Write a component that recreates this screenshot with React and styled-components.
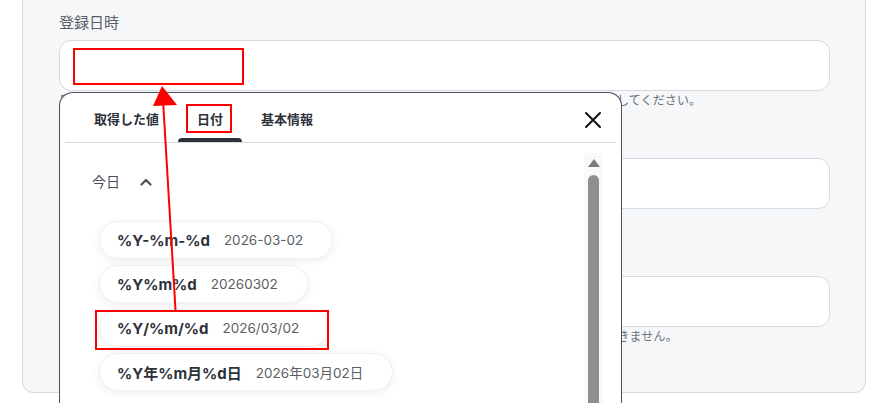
import React from 'react';
import styled, { createGlobalStyle } from 'styled-components';

const GlobalStyle = createGlobalStyle`
    html, body {
        margin: 0;
        padding: 0;
        background: #ffffff;
    }
    body {
        font-family: Inter, "Noto Sans CJK JP", sans-serif;
        color: #2d3139;
    }
`;

const Page = styled.div`
    position: relative;
    width: 893px;
    height: 403px;
    overflow: hidden;
    padding: 0 27px 0 22px;
    box-sizing: border-box;
`;

const Card = styled.section`
    background: #f6f7f9;
    border: 1px solid #d5d9e0;
    border-top: none;
    border-radius: 0 0 12px 12px;
    padding: 13px 35px 47px 36px;
    display: flex;
    flex-direction: column;
    gap: 22px;
`;

const Field = styled.div`
    display: flex;
    flex-direction: column;
`;

const Label = styled.label`
    font-size: 15px;
    line-height: 20px;
    color: #5b6068;
    margin-bottom: 7px;
`;

const InputWrap = styled.div`
    position: relative;
`;

const Input = styled.div`
    height: 51px;
    box-sizing: border-box;
    background: #ffffff;
    border: 1px solid #d5d9e0;
    border-radius: 12px;
`;

const Helper = styled.p`
    margin: 2px 0 0;
    font-size: 12px;
    letter-spacing: 0.14px;
    line-height: 16px;
    color: #6b7078;
    white-space: nowrap;
`;

const Popup = styled.div`
    position: absolute;
    left: 0;
    top: calc(100% + 1px);
    width: 563px;
    height: 330px;
    box-sizing: border-box;
    background: #ffffff;
    border: 1px solid #4b5058;
    border-bottom: none;
    border-radius: 14px 14px 0 0;
    display: flex;
    flex-direction: column;
    z-index: 2;
`;

const TabBar = styled.div`
    display: flex;
    align-items: flex-end;
    margin: 0 5px;
    padding: 0 15px 0 10px;
    border-bottom: 1px solid #d6dae1;
`;

const Tab = styled.div`
    position: relative;
    padding: 16px 19px 13px;
    font-size: 13px;
    font-weight: 700;
    line-height: 20px;
    color: #2d3139;

    &::after {
        content: '';
        display: ${p => (p.$active ? 'block' : 'none')};
        position: absolute;
        left: 0;
        right: 0;
        bottom: 0;
        height: 4px;
        border-radius: 4px 4px 0 0;
        background: #2d3139;
    }
`;

const CloseButton = styled.button`
    margin-left: auto;
    align-self: center;
    margin-top: 4px;
    width: 16px;
    height: 16px;
    padding: 0;
    border: none;
    background: none;
    display: flex;
`;

const Body = styled.div`
    flex: 1;
    display: flex;
    min-height: 0;
`;

const List = styled.div`
    flex: 1;
    padding-top: 28px;
`;

const SectionHead = styled.div`
    display: flex;
    align-items: center;
    gap: 20px;
    padding-left: 32px;
    font-size: 14px;
    line-height: 22px;
    color: #4b5058;
`;

const Pills = styled.div`
    display: flex;
    flex-direction: column;
    align-items: flex-start;
    gap: 6px;
    padding: 28px 0 0 39px;
`;

const Pill = styled.div`
    display: flex;
    align-items: center;
    gap: 14px;
    height: 38px;
    box-sizing: border-box;
    padding: 0 29px 0 17px;
    background: #ffffff;
    border: 1px solid #eef0f3;
    border-radius: 19px;
    box-shadow: 0 2px 8px rgba(0, 0, 0, 0.07);
`;

const Code = styled.span`
    font-size: 15px;
    font-weight: 700;
    color: #2d3139;
`;

const Sample = styled.span`
    font-size: 13.5px;
    color: #5a5f66;
`;

const Scrollbar = styled.div`
    width: 19px;
    margin: 10px 18px 0 0;
    background: #f9f9f9;
    display: flex;
    flex-direction: column;
    align-items: center;
`;

const ScrollArrow = styled.div`
    margin-top: 6px;
    width: 0;
    height: 0;
    border-left: 6px solid transparent;
    border-right: 6px solid transparent;
    border-bottom: 8px solid #7c7c7c;
`;

const Thumb = styled.div`
    margin-top: 8px;
    flex: 1;
    width: 11px;
    border-radius: 6px 6px 0 0;
    background: #8f8f8f;
`;

const Annotations = styled.svg`
    position: absolute;
    left: 0;
    top: 0;
    z-index: 5;
    pointer-events: none;
`;

const formats = [
    { code: '%Y-%m-%d', sample: '2026-03-02' },
    { code: '%Y%m%d', sample: '20260302' },
    { code: '%Y/%m/%d', sample: '2026/03/02' },
    { code: '%Y年%m月%d日', sample: '2026年03月02日' },
];

const App = () => {
    return (
        <>
            <GlobalStyle />
            <Page>
                <Card>
                    <Field>
                        <Label>登録日時</Label>
                        <InputWrap>
                            <Input />
                            <Popup>
                                <TabBar>
                                    <Tab>取得した値</Tab>
                                    <Tab $active>日付</Tab>
                                    <Tab>基本情報</Tab>
                                    <CloseButton aria-label="閉じる">
                                        <svg width="16" height="16" viewBox="0 0 16 16">
                                            <path d="M1 1 L15 15 M15 1 L1 15" stroke="#111" strokeWidth="2" strokeLinecap="round" />
                                        </svg>
                                    </CloseButton>
                                </TabBar>
                                <Body>
                                    <List>
                                        <SectionHead>
                                            今日
                                            <svg width="12" height="8" viewBox="0 0 12 8">
                                                <path d="M1.5 6.5 L6 2 L10.5 6.5" fill="none" stroke="#4b5058" strokeWidth="2.2" strokeLinecap="round" strokeLinejoin="round" />
                                            </svg>
                                        </SectionHead>
                                        <Pills>
                                            {formats.map(f => (
                                                <Pill key={f.code}>
                                                    <Code>{f.code}</Code>
                                                    <Sample>{f.sample}</Sample>
                                                </Pill>
                                            ))}
                                        </Pills>
                                    </List>
                                    <Scrollbar>
                                        <ScrollArrow />
                                        <Thumb />
                                    </Scrollbar>
                                </Body>
                            </Popup>
                        </InputWrap>
                        <Helper>日付は年月日の形式で入力するか、候補の一覧から取得した値や日付の書式を選択するか、自由に編集してください。</Helper>
                    </Field>
                    <Field>
                        <Label>ステータス</Label>
                        <Input />
                        <Helper>任意</Helper>
                    </Field>
                    <Field>
                        <Label>備考</Label>
                        <Input />
                        <Helper>この項目はフローの実行時に自動で設定されるため、ここで入力した内容をあとから変更することはできません。</Helper>
                    </Field>
                </Card>
                <Annotations width="893" height="403" viewBox="0 0 893 403">
                    <g fill="none" stroke="#ff0000" strokeWidth="2">
                        <rect x="74" y="49" width="169" height="35" />
                        <rect x="187" y="105" width="44" height="27" />
                        <rect x="96" y="311" width="232" height="38" />
                        <line x1="175.5" y1="310" x2="163" y2="100" />
                    </g>
                    <polygon points="162,86 153,106 177,105" fill="#ff0000" />
                </Annotations>
            </Page>
        </>
    );
};

export default App
